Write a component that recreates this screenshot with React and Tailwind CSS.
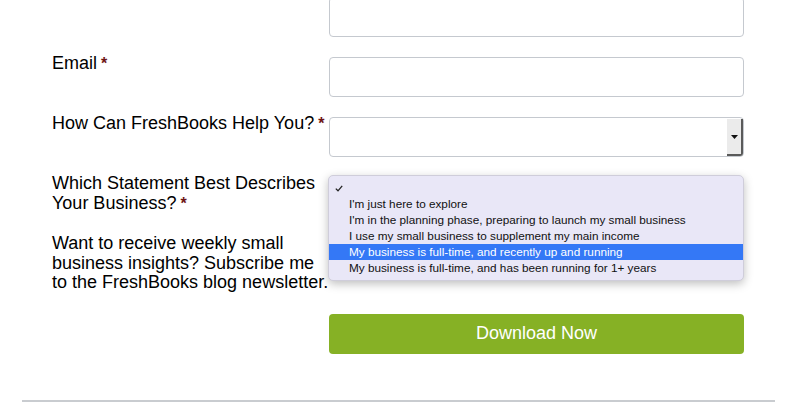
const options = [
  "I'm just here to explore",
  "I'm in the planning phase, preparing to launch my small business",
  'I use my small business to supplement my main income',
  'My business is full-time, and recently up and running',
  'My business is full-time, and has been running for 1+ years',
]

function Req() {
  return <span className="ml-[4px] text-[16px] leading-none font-bold text-[#6e1515]">*</span>
}

function Field({ label, children }) {
  return (
    <div className="flex items-start">
      <div className="w-[277px] shrink-0 -mt-[3px] text-[18px] leading-[19.5px]">{label}</div>
      {children}
    </div>
  )
}

function TextBox() {
  return <div className="w-[415px] h-[40px] rounded-[4px] border border-[#c5c9cf] bg-white" />
}

function SelectBox() {
  return (
    <div className="relative w-[415px] h-[40px] rounded-[4px] border border-[#c5c9cf] bg-white">
      <div className="absolute right-0 top-[1px] bottom-0 w-[16px] flex items-center justify-center bg-[#ebebeb] border-r-2 border-b-2 border-[#5a5a5a] rounded-br-[3px]">
        <svg width="7" height="4" viewBox="0 0 7 4">
          <path d="M0 0h7L3.5 4z" fill="#111" />
        </svg>
      </div>
    </div>
  )
}

export default function App() {
  return (
    <div className="relative w-[797px] h-[409px] overflow-hidden bg-white text-black font-['Liberation_Sans',Arial,sans-serif]">
      <div className="flex flex-col gap-[20px] pl-[52px] -mt-[3px]">
        <Field label="">
          <TextBox />
        </Field>
        <Field label={<>Email<Req /></>}>
          <TextBox />
        </Field>
        <Field label={<>How Can FreshBooks Help You?<Req /></>}>
          <SelectBox />
        </Field>
        <Field label={<>Which Statement Best Describes Your Business?<Req /></>}>
          <SelectBox />
        </Field>
        <Field
          label={
            <span className="whitespace-nowrap">
              Want to receive weekly small
              <br />
              business insights? Subscribe me
              <br />
              to the FreshBooks blog newsletter.
            </span>
          }
        >
          <div />
        </Field>
        <div className="flex mt-[1px]">
          <div className="w-[277px] shrink-0" />
          <button className="w-[415px] h-[40px] rounded-[4px] bg-[#86b125] text-white text-[18px]">
            Download Now
          </button>
        </div>
      </div>

      <div className="mx-[22px] mt-[46px] h-[2px] bg-[#c9ccd0]" />

      <div className="absolute left-[328px] top-[175px] w-[416px] py-[4px] rounded-[5px] border border-[#cfcdda] bg-[#e9e7f7] shadow-[0_3px_10px_rgba(0,0,0,0.25)] font-['Liberation_Sans',Arial,sans-serif] text-[11.75px] text-[#111]">
        <div className="h-[16px] flex items-center pl-[6px]">
          <svg width="8" height="7" viewBox="0 0 8 7">
            <path d="M0.8 3.6L3 5.8L7.2 0.8" fill="none" stroke="#222" strokeWidth="1.3" />
          </svg>
        </div>
        {options.map((o, i) => (
          <div
            key={o}
            className={`h-[16px] leading-[16px] pl-[20px] whitespace-nowrap ${i === 3 ? 'bg-[#3478f6] text-white' : ''}`}
          >
            {o}
          </div>
        ))}
      </div>
    </div>
  )
}
